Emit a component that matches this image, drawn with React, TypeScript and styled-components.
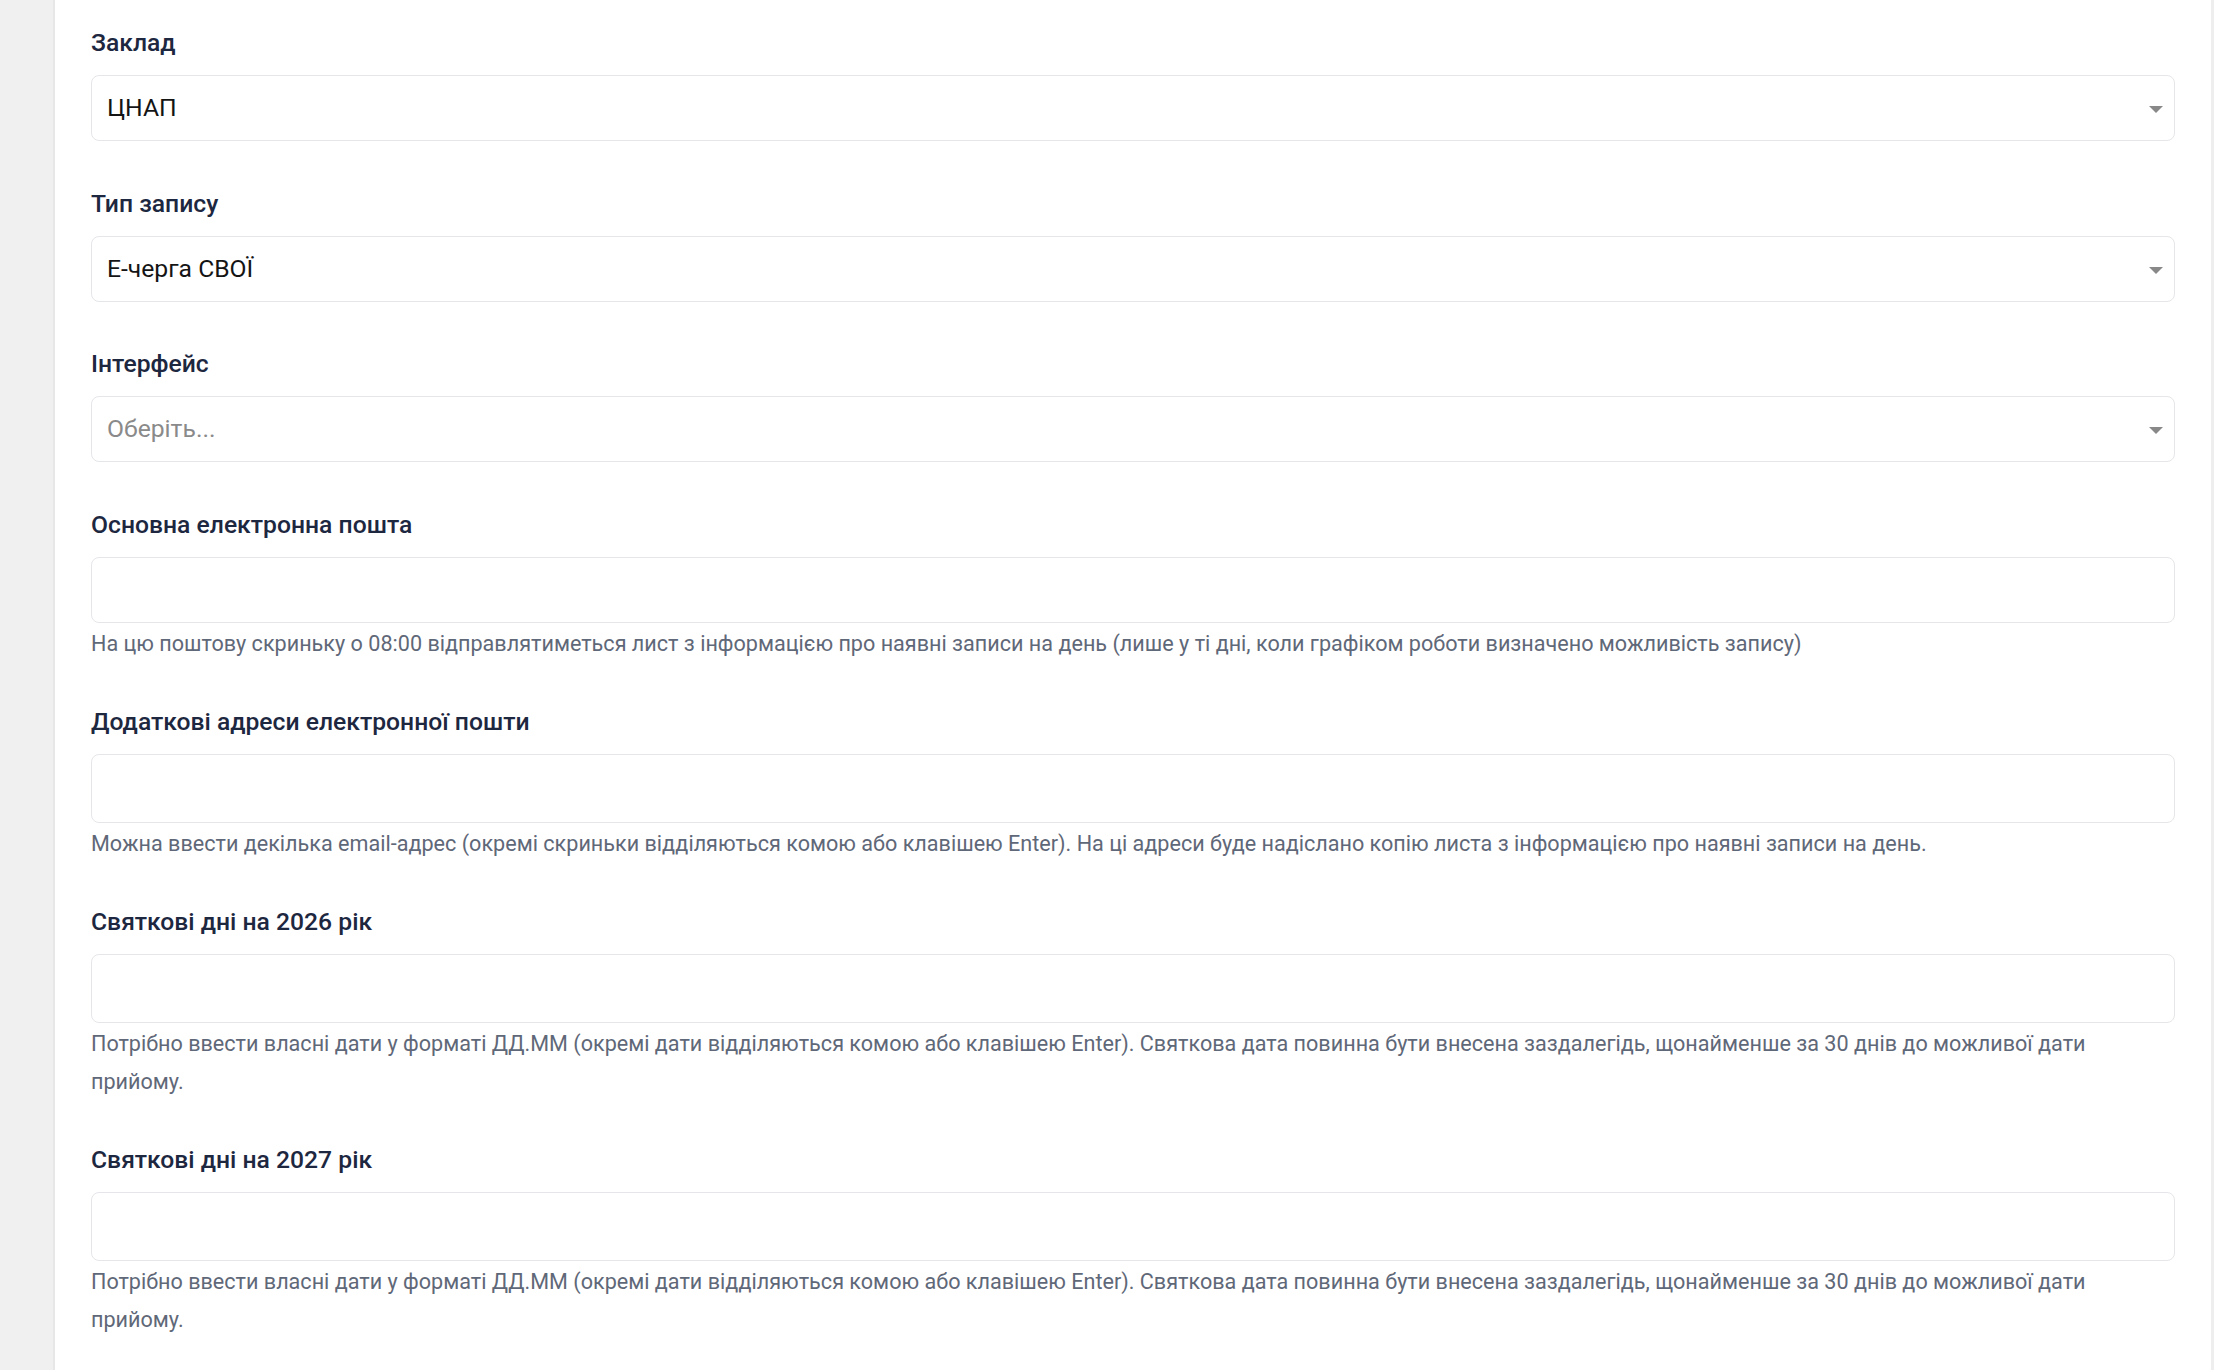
import styled, { createGlobalStyle } from 'styled-components';

const GlobalStyle = createGlobalStyle`
	html, body {
		margin: 0;
		padding: 0;
		overflow: hidden;
		background: #ffffff;
	}
	body {
		font-family: Roboto, 'Liberation Sans', Arial, sans-serif;
	}
`;

type SelectField = { kind: 'select'; label: string; value?: string; placeholder?: string };
type InputField = { kind: 'input' | 'tags'; label: string; help?: string };
type Field = SelectField | InputField;

const HOLIDAY_HELP =
	'Потрібно ввести власні дати у форматі ДД.ММ (окремі дати відділяються комою або клавішею Enter). Святкова дата повинна бути внесена заздалегідь, щонайменше за 30 днів до можливої дати прийому.';

const FIELDS: Field[] = [
	{ kind: 'select', label: 'Заклад', value: 'ЦНАП' },
	{ kind: 'select', label: 'Тип запису', value: 'Е-черга СВОЇ' },
	{ kind: 'select', label: 'Інтерфейс', placeholder: 'Оберіть...' },
	{
		kind: 'input',
		label: 'Основна електронна пошта',
		help: 'На цю поштову скриньку о 08:00 відправлятиметься лист з інформацією про наявні записи на день (лише у ті дні, коли графіком роботи визначено можливість запису)',
	},
	{
		kind: 'tags',
		label: 'Додаткові адреси електронної пошти',
		help: 'Можна ввести декілька email-адрес (окремі скриньки відділяються комою або клавішею Enter). На ці адреси буде надіслано копію листа з інформацією про наявні записи на день.',
	},
	{ kind: 'tags', label: 'Святкові дні на 2026 рік', help: HOLIDAY_HELP },
	{ kind: 'tags', label: 'Святкові дні на 2027 рік', help: HOLIDAY_HELP },
];

const App = () => {
	return (
		<>
			<GlobalStyle />
			<Page>
				<SideStrip />
				<Content>
					{FIELDS.map((field) => {
						const help = 'help' in field ? field.help : undefined;
						return (
							<FieldGroup key={field.label} $hasHelp={!!help}>
								<Label>{field.label}</Label>
								{field.kind === 'select' ? (
									<SelectBox>
										{field.value ? (
											<SelectValue>{field.value}</SelectValue>
										) : (
											<SelectValue $placeholder>{field.placeholder}</SelectValue>
										)}
										<Caret />
									</SelectBox>
								) : (
									<TextBox $tall={field.kind === 'tags'} />
								)}
								{help && <HelpText>{help}</HelpText>}
							</FieldGroup>
						);
					})}
				</Content>
				<ScrollStrip />
			</Page>
		</>
	);
};

const Page = styled.div`
	display: grid;
	grid-template-columns: 55px 1fr 3px;
	min-height: 100vh;
	background: #ffffff;
`;

const SideStrip = styled.div`
	background: #f0f0f0;
	border-right: 2px solid #e7e7e7;
`;

const ScrollStrip = styled.div`
	background: #eeeeee;
`;

const Content = styled.main`
	padding: 24px 36px 0 36px;
`;

const FieldGroup = styled.div<{ $hasHelp?: boolean }>`
	margin-bottom: ${({ $hasHelp }) => ($hasHelp ? '40px' : '43.5px')};
`;

const Label = styled.label`
	display: block;
	margin-bottom: 14px;
	font-size: 24.7px;
	line-height: 37px;
	font-weight: 500;
	color: #1d2740;
`;

const SelectBox = styled.div`
	display: flex;
	align-items: center;
	justify-content: space-between;
	box-sizing: border-box;
	height: 66px;
	padding: 0 11px 0 15px;
	border: 1px solid #e5e6e9;
	border-radius: 8px;
	background: #ffffff;
`;

const SelectValue = styled.span<{ $placeholder?: boolean }>`
	font-size: 24.7px;
	line-height: 32px;
	color: ${({ $placeholder }) => ($placeholder ? '#8a8a8a' : '#141414')};
`;

const Caret = styled.span`
	width: 0;
	height: 0;
	margin-top: 3px;
	border-left: 7px solid transparent;
	border-right: 7px solid transparent;
	border-top: 7px solid #888888;
`;

const TextBox = styled.div<{ $tall?: boolean }>`
	box-sizing: border-box;
	height: ${({ $tall }) => ($tall ? '69px' : '66px')};
	border: 1px solid #e5e6e9;
	border-radius: 8px;
	background: #ffffff;
`;

const HelpText = styled.p`
	margin: 2px 0 0 0;
	font-size: 21.6px;
	line-height: 38px;
	color: #5f6878;
`;

export default App;
